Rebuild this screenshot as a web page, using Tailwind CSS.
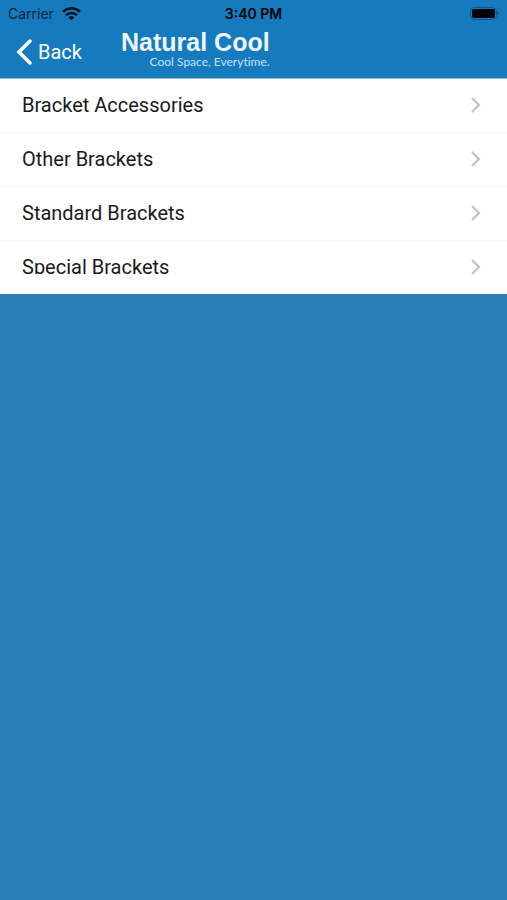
<!DOCTYPE html>
<html lang="en">
<head>
<meta charset="utf-8">
<meta name="viewport" content="width=device-width, initial-scale=1">
<title>Natural Cool</title>
<script src="https://cdn.jsdelivr.net/npm/@tailwindcss/browser@4"></script>
</head>
<body class="min-h-screen bg-[#297eb7] font-['Inter','Liberation_Sans',sans-serif]">
<header class="border-b border-[#8fc0e2] bg-[#167abf]">
  <div class="grid h-7 grid-cols-3 items-center px-2 text-black">
    <div class="flex items-center gap-2 text-sm text-[#04213a]">
      <span>Carrier</span>
      <svg class="h-[14px] w-[19px]" viewBox="0 0 18 13" fill="none" stroke="#04121f" stroke-width="2.500" aria-hidden="true">
        <path d="M1 4.300A11.500 11.500 0 0 1 17 4.300"/>
        <path d="M3.800 7.600A7.500 7.500 0 0 1 14.200 7.600"/>
        <path d="M9 12.500L6.200 9.700A4 4 0 0 1 11.800 9.700Z" fill="#04121f" stroke="none"/>
      </svg>
    </div>
    <time class="text-center text-sm font-semibold">3:40 PM</time>
    <svg class="h-[14px] w-[29px] justify-self-end" viewBox="0 0 29 14" aria-hidden="true">
      <rect x=".5" y=".5" width="26" height="12" rx="4" fill="none" stroke="#0d5688"/>
      <rect x="2" y="2" width="23" height="9" rx="2" fill="#000"/>
      <path d="M27.500 4.500v4q1.500-.6 1.500-2t-1.500-2Z" fill="#0d5688"/>
    </svg>
  </div>
  <div class="flex h-[50px] items-start pl-4 text-white">
    <button type="button" class="flex h-12 w-[105px] items-center gap-[5px] font-['Roboto',sans-serif] text-xl">
      <svg class="h-[28px] w-[17px]" viewBox="0 0 17 28" fill="none" stroke="#fff" stroke-width="3.500" stroke-linecap="round" aria-hidden="true"><path d="M14 3L3 14L14 25"/></svg>
      <span>Back</span>
    </button>
    <div class="flex flex-col items-end text-[#edf6ff]">
      <span class="font-['Liberation_Sans',sans-serif] text-[25px] leading-7 font-bold">Natural Cool</span>
      <span class="font-['Lato',sans-serif] text-xs leading-3 text-[#c5e2fa] [font-variant-ligatures:none]">Cool Space, Everytime.</span>
    </div>
  </div>
</header>
<main>
  <ul class="divide-y divide-[#f5f5f5] bg-white font-['Roboto',sans-serif] text-xl leading-6 text-[#1a1a1a]">
    <li><a href="#accessories" class="flex h-[53px] items-center justify-between pb-[2px] pl-[22px] pr-[26px]"><span>Bracket Accessories</span><svg class="h-4 w-[11px]" viewBox="0 0 11 16" fill="none" stroke="#c4c4c4" stroke-width="2.300" aria-hidden="true"><path d="M2 1L9 8L2 15"/></svg></a></li>
    <li><a href="#other" class="flex h-[53px] items-center justify-between pb-[2px] pl-[22px] pr-[26px]"><span>Other Brackets</span><svg class="h-4 w-[11px]" viewBox="0 0 11 16" fill="none" stroke="#c4c4c4" stroke-width="2.300" aria-hidden="true"><path d="M2 1L9 8L2 15"/></svg></a></li>
    <li><a href="#standard" class="flex h-[53px] items-center justify-between pb-[2px] pl-[22px] pr-[26px]"><span>Standard Brackets</span><svg class="h-4 w-[11px]" viewBox="0 0 11 16" fill="none" stroke="#c4c4c4" stroke-width="2.300" aria-hidden="true"><path d="M2 1L9 8L2 15"/></svg></a></li>
    <li><a href="#special" class="flex h-[53px] items-center justify-between pb-[2px] pl-[22px] pr-[26px]"><span class="mb-[5px] h-[19px] overflow-hidden">Special Brackets</span><svg class="h-4 w-[11px]" viewBox="0 0 11 16" fill="none" stroke="#c4c4c4" stroke-width="2.300" aria-hidden="true"><path d="M2 1L9 8L2 15"/></svg></a></li>
  </ul>
</main>
</body>
</html>
